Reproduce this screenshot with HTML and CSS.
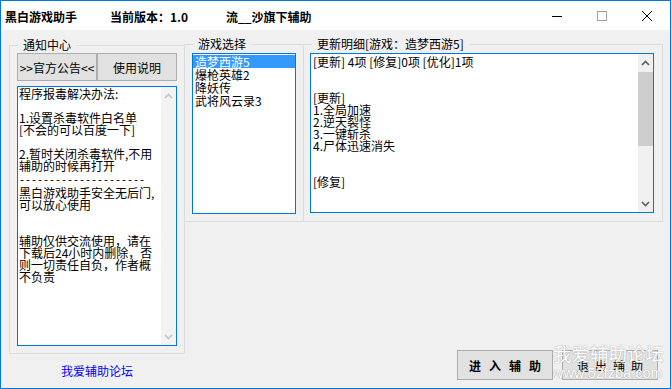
FILE: index.html
```html
<!DOCTYPE html>
<html lang="zh-CN">
<head>
  <meta charset="UTF-8" />
  <title>黑白游戏助手</title>
  <link rel="stylesheet" href="styles.css">
</head>
<body>

  <div class="window">
    <!-- Title bar -->
    <div class="titlebar">
      <div class="title-text">
        <span class="t-name">黑白游戏助手</span>
        <span class="t-ver">当前版本：1.0</span>
        <span class="t-author">流__沙旗下辅助</span>
      </div>
      <div class="caption">
        <div class="cap"><svg width="10" height="10"><line x1="0" y1="5.5" x2="10" y2="5.5" stroke="#000" /></svg></div>
        <div class="cap"><svg width="10" height="10"><rect x="0.5" y="0.5" width="9" height="9" fill="none" stroke="#a0a0a0" /></svg></div>
        <div class="cap"><svg width="10" height="10"><path d="M0 0L10 10M10 0L0 10" stroke="#000" /></svg></div>
      </div>
    </div>

    <div class="content">
      <!-- Notice center -->
      <div class="left-col">
        <fieldset class="group notice">
          <legend>通知中心</legend>
          <div class="btn-row">
            <button class="btn">&gt;&gt;官方公告&lt;&lt;</button>
            <button class="btn">使用说明</button>
          </div>
          <div class="textbox notice-box">
            <div class="text">程序报毒解决办法:

1.设置杀毒软件白名单
[不会的可以百度一下]

2.暂时关闭杀毒软件,不用
辅助的时候再打开
<span class="dash">---------------------</span>
黑白游戏助手安全无后门,
可以放心使用


辅助仅供交流使用，请在
下载后24小时内删除，否
则一切责任自负，作者概
不负责</div>
            <div class="vscroll disabled">
              <div class="arrow"><svg width="9" height="6"><polyline points="1,5 4.5,1.5 8,5" fill="none" stroke="#c4c4c4" stroke-width="1.6" /></svg></div>
              <div class="arrow"><svg width="9" height="6"><polyline points="1,1 4.5,4.5 8,1" fill="none" stroke="#c4c4c4" stroke-width="1.6" /></svg></div>
            </div>
          </div>
        </fieldset>
        <a class="forum-link" href="#">我爱辅助论坛</a>
      </div>

      <div class="right-col">
        <div class="group-row">
          <!-- Game list -->
          <fieldset class="group games">
            <legend>游戏选择</legend>
            <ul class="listbox">
              <li class="selected">造梦西游5</li>
              <li>爆枪英雄2</li>
              <li>降妖传</li>
              <li>武将风云录3</li>
            </ul>
          </fieldset>

          <!-- Update details -->
          <fieldset class="group details">
            <legend>更新明细[游戏：造梦西游5]</legend>
            <div class="textbox detail-box">
              <div class="text detail-text">[更新] 4项 [修复]0项 [优化]1项


[更新]
1.全局加速
2.逆天裂怪
3.一键斩杀
4.尸体迅速消失


[修复]</div>
              <div class="vscroll">
                <div class="arrow"><svg width="9" height="6"><polyline points="1,5 4.5,1.5 8,5" fill="none" stroke="#606060" stroke-width="1.6" /></svg></div>
                <div class="thumb"></div>
                <div class="track"></div>
                <div class="arrow"><svg width="9" height="6"><polyline points="1,1 4.5,4.5 8,1" fill="none" stroke="#606060" stroke-width="1.6" /></svg></div>
              </div>
            </div>
          </fieldset>
        </div>

        <div class="action-row">
          <button class="btn big enter">进入辅助</button>
          <button class="btn big quit">退出辅助</button>
        </div>
      </div>
    </div>

    <div class="watermark">
      <div class="wm-title">我爱辅助论坛</div>
      <div class="wm-url">www.52fzba.com</div>
    </div>
  </div>

</body>
</html>
```

FILE: styles.css
```css
body {
  margin: 0;
  font-family: "Noto Sans CJK SC", sans-serif;
  font-size: 12px;
  color: #000;
}

.window {
  width: 671px;
  height: 389px;
  box-sizing: border-box;
  border: 1px solid #0078d7;
  background: #f0f0f0;
  position: relative;
  display: flex;
  flex-direction: column;
}

/* title bar */
.titlebar {
  height: 29px;
  background: #fff;
  display: flex;
  align-items: center;
  padding: 0 1px 0 4px;
}

.title-text {
  display: flex;
  font-weight: bold;
  line-height: 12px;
  padding-top: 3px;
}

.t-name {
  width: 105px;
}

.t-ver {
  width: 116px;
}

.caption {
  margin-left: auto;
  display: flex;
  height: 29px;
}

.cap {
  width: 45px;
  display: flex;
  align-items: center;
  justify-content: center;
}

/* body */
.content {
  flex: 1;
  display: flex;
  padding-left: 8px;
}

.left-col {
  width: 176px;
  padding-top: 9px;
  display: flex;
  flex-direction: column;
  align-items: center;
}

.group {
  margin: 0;
  min-width: 0;
  border: 1px solid #dcdcdc;
  box-sizing: border-box;
}

.group legend {
  padding: 0 5px;
  margin-left: 1px;
  line-height: 12px;
  font-size: 12px;
}

.notice {
  width: 176px;
  padding: 2px 7px 7px 7px;
}

.btn-row {
  display: flex;
}

.btn {
  width: 80px;
  height: 28px;
  padding: 0;
  background: #e1e1e1;
  border: 1px solid #adadad;
  font-family: "Noto Sans CJK SC", sans-serif;
  font-size: 12px;
  color: #000;
}

.textbox {
  box-sizing: border-box;
  border: 1px solid #0078d7;
  background: #fff;
  display: flex;
}

.notice-box {
  margin-top: 5px;
  width: 160px;
  height: 260px;
}

.text {
  flex: 1;
  padding: 1px 0 0 1px;
  line-height: 12px;
  white-space: pre-line;
  overflow: hidden;
}

.dash {
  font-family: "Liberation Mono", monospace;
  font-size: 10px;
}

.vscroll {
  width: 15px;
  background: #f0f0f0;
  display: flex;
  flex-direction: column;
  justify-content: space-between;
}

.vscroll.disabled {
  background: #f3f3f3;
}

.arrow {
  height: 17px;
  display: flex;
  align-items: center;
  justify-content: center;
}

.thumb {
  height: 74px;
  margin-top: 1px;
  background: #cdcdcd;
}

.track {
  flex: 1;
}

.forum-link {
  margin-top: 11px;
  line-height: 12px;
  color: #0000ff;
  text-decoration: none;
}

.right-col {
  flex: 1;
  display: flex;
  flex-direction: column;
}

.group-row {
  display: flex;
  padding-top: 8px;
}

.games {
  width: 120px;
  margin-left: -1px;
  padding: 3px 7px 7px 7px;
}

.listbox {
  list-style: none;
  margin: 0;
  padding: 1px 0 0 0;
  width: 104px;
  height: 161px;
  box-sizing: border-box;
  border: 1px solid #0078d7;
  background: #fff;
}

.listbox li {
  height: 13px;
  line-height: 13px;
  padding-left: 2px;
}

.listbox .selected {
  background: #3399ff;
  color: #fff;
}

.details {
  width: 360px;
  margin-left: -1px;
  padding: 3px 8px 8px 6px;
}

.details legend {
  margin-left: 2px;
}

.detail-box {
  width: 344px;
  height: 160px;
}

.detail-text {
  padding: 2px 0 0 2px;
}

.action-row {
  margin-top: auto;
  display: flex;
  justify-content: flex-end;
  gap: 9px;
  padding: 0 12px 8px 0;
}

.btn.big {
  width: 96px;
  height: 30px;
}

.enter {
  font-weight: bold;
  letter-spacing: 8px;
  padding-left: 8px;
}

.quit {
  letter-spacing: 6px;
  padding-left: 6px;
}

/* site watermark */
.watermark {
  position: absolute;
  left: 552px;
  top: 341px;
  color: #fff;
  text-shadow: 0 0 1px #a8a8a8, 0 0 1px #a8a8a8;
  pointer-events: none;
}

.wm-title {
  font-size: 18.5px;
  line-height: 22px;
}

.wm-url {
  font-family: "Liberation Sans", sans-serif;
  font-size: 14.5px;
  line-height: 18px;
}
```
